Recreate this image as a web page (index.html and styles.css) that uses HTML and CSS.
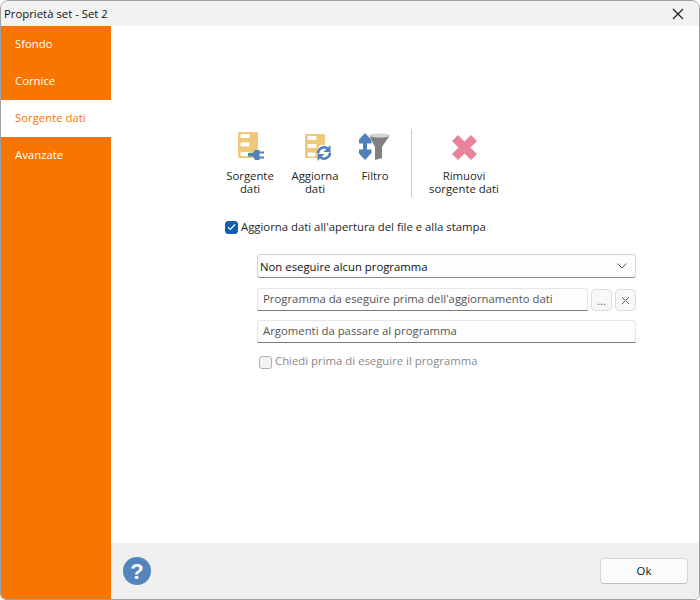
FILE: index.html
```html
<!DOCTYPE html>
<html lang="it">
<head>
<meta charset="utf-8">
<title>Proprietà set - Set 2</title>
<link rel="stylesheet" href="styles.css">
</head>
<body>
<div class="window">
  <header class="titlebar">
    <span class="title">Proprietà set - Set 2</span>
    <svg class="close" width="12" height="12" viewBox="0 0 12 12"><path d="M1 1l10 10M11 1L1 11" stroke="#1a1a1a" stroke-width="1.1" fill="none"/></svg>
  </header>
  <div class="main">
    <nav class="sidebar">
      <div class="nav-item">Sfondo</div>
      <div class="nav-item">Cornice</div>
      <div class="nav-item active">Sorgente dati</div>
      <div class="nav-item">Avanzate</div>
    </nav>
    <div class="content">
      <div class="panel">
        <div class="toolbar">
          <div class="tool tool-source">
            <svg class="icon" width="32" height="32" viewBox="0 0 32 32">
              <path d="M4 3.500Q4 2 5.500 2H22.500Q24 2 24 3.500V9Q24 10 23 10Q24 10 24 11V18Q24 19 23 19Q24 19 24 20V26.500Q24 28 22.500 28H5.500Q4 28 4 26.500Z" fill="#f0c87a"/>
              <rect x="6.500" y="4" width="9" height="4" rx="1" fill="#fff"/>
              <rect x="6.500" y="12.500" width="9" height="4" rx="1" fill="#fff"/>
              <rect x="6.500" y="22" width="9" height="4" rx="1" fill="#fff"/>
              <path d="M14 23H19L21 20H25.500V30H21L19 26.500H14Z" fill="#4f81bd"/>
              <path d="M25 22.500H30M25 27.500H30" stroke="#4f81bd" stroke-width="2.200" fill="none"/>
            </svg>
            <span class="tool-label">Sorgente<br>dati</span>
          </div>
          <div class="tool tool-refresh">
            <svg class="icon" width="32" height="32" viewBox="0 0 32 32">
              <path d="M6 5.500Q6 4 7.500 4H24.500Q26 4 26 5.500V10Q26 11 25 11Q26 11 26 12V15H22Q17 17 18 28H7.500Q6 28 6 26.500Z" fill="#f0c87a"/>
              <rect x="8.500" y="6" width="9" height="4" rx="1" fill="#fff"/>
              <rect x="8.500" y="14" width="9" height="4" rx="1" fill="#fff"/>
              <rect x="8.500" y="22.500" width="8" height="4" rx="1" fill="#fff"/>
              <path d="M19 23.500A6 6 0 0 1 28.500 18.500" stroke="#4f81bd" stroke-width="2.600" fill="none"/>
              <path d="M31.500 15V22H24.500Z" fill="#4f81bd"/>
              <path d="M31 22.500A6 6 0 0 1 21.500 27.500" stroke="#4f81bd" stroke-width="2.600" fill="none"/>
              <path d="M18.500 31V24H25.500Z" fill="#4f81bd"/>
            </svg>
            <span class="tool-label">Aggiorna<br>dati</span>
          </div>
          <div class="tool tool-filter">
            <svg class="icon" width="32" height="32" viewBox="0 0 32 32">
              <path d="M10 5H31L23 17V28L16 30V17Z" fill="#808080"/>
              <ellipse cx="20.500" cy="5.500" rx="10.500" ry="2" fill="#d4d4d4"/>
              <path d="M6 3L12.500 10V13.500H8V19.500H12.500V23L6 30L-.5 23V19.500H4V13.500H-.5V10Z" fill="#4f81bd"/>
            </svg>
            <span class="tool-label">Filtro</span>
          </div>
          <div class="divider"></div>
          <div class="tool tool-remove">
            <svg class="icon" width="32" height="32" viewBox="0 0 32 32">
              <path d="M4 11L10 5L16.500 11.500L23 5L29 11L22.500 17.500L29 24L23 30L16.500 23.500L10 30L4 24L10.500 17.500Z" fill="#e8849a"/>
            </svg>
            <span class="tool-label">Rimuovi<br>sorgente dati</span>
          </div>
        </div>
        <label class="check-row">
          <span class="check checked">
            <svg width="9" height="8" viewBox="0 0 9 8"><path d="M1 4.200L3.300 6.500L8 1.500" stroke="#fff" stroke-width="1.200" fill="none"/></svg>
          </span>
          <span class="check-label">Aggiorna dati all'apertura del file e alla stampa</span>
        </label>
        <div class="options">
          <div class="select">
            <span>Non eseguire alcun programma</span>
            <svg width="10" height="6" viewBox="0 0 10 6"><path d="M.5 .5L5 5L9.500 .5" stroke="#555" stroke-width="1" fill="none"/></svg>
          </div>
          <div class="program-row">
            <div class="input grow">Programma da eseguire prima dell'aggiornamento dati</div>
            <div class="mini-btn dots">...</div>
            <div class="mini-btn">
              <svg width="9" height="9" viewBox="0 0 9 9"><path d="M1 1l7 7M8 1L1 8" stroke="#666" stroke-width="1" fill="none"/></svg>
            </div>
          </div>
          <div class="input">Argomenti da passare al programma</div>
          <label class="check-row disabled">
            <span class="check"></span>
            <span class="check-label">Chiedi prima di eseguire il programma</span>
          </label>
        </div>
      </div>
      <footer class="footer">
        <svg class="help" width="28" height="28" viewBox="0 0 28 28">
          <circle cx="14" cy="14" r="14" fill="#5484bc"/>
          <text x="14" y="21.500" text-anchor="middle" class="help-mark">?</text>
        </svg>
        <button class="ok" type="button">Ok</button>
      </footer>
    </div>
  </div>
</div>
</body>
</html>
```

FILE: styles.css
```css
html, body {
  margin: 0;
  padding: 0;
}
body {
  width: 700px;
  height: 600px;
  overflow: hidden;
  background: #fff;
  font-family: "Open Sans", "Liberation Sans", sans-serif;
  font-size: 11.35px;
  color: #1f1f1f;
}
.window {
  box-sizing: border-box;
  width: 700px;
  height: 600px;
  border: 1px solid #a0a0a0;
  border-radius: 8px 8px 6px 6px;
  display: flex;
  flex-direction: column;
  overflow: hidden;
}
.titlebar {
  height: 25px;
  flex: none;
  background: #f2f2f2;
  display: flex;
  align-items: center;
  justify-content: space-between;
  padding: 0 15px 0 3px;
}
.title {
  color: #111;
}
.main {
  flex: 1;
  display: flex;
  min-height: 0;
}
.sidebar {
  width: 110px;
  flex: none;
  background: #f77500;
}
.nav-item {
  height: 37px;
  line-height: 36px;
  padding-left: 14px;
  color: #fff;
}
.nav-item.active {
  background: #fff;
  color: #f77500;
}
.content {
  flex: 1;
  display: flex;
  flex-direction: column;
  min-width: 0;
}
.panel {
  flex: 1;
  padding: 103px 63px 0 114px;
}
.toolbar {
  display: flex;
  height: 68px;
}
.tool {
  display: flex;
  flex-direction: column;
  align-items: center;
  text-align: center;
  line-height: 13px;
  padding-top: 1px;
}
.tool .icon {
  margin-bottom: 7px;
}
.tool-label {
  white-space: nowrap;
}
.tool-source { width: 50px; }
.tool-refresh { width: 50px; margin-left: 15px; }
.tool-filter { width: 36px; margin-left: 17px; }
.divider {
  width: 1px;
  background: #c8c8c8;
  margin-left: 18px;
}
.tool-remove { width: 80px; margin-left: 12px; }
.check-row {
  display: flex;
  align-items: center;
  gap: 3px;
  margin-top: 21px;
  height: 18px;
}
.check-label {
  padding-bottom: 2px;
}
.check {
  box-sizing: border-box;
  width: 13px;
  height: 13px;
  border-radius: 3px;
  border: 1px solid #b0b0b0;
  background: #f4f4f4;
  display: flex;
  align-items: center;
  justify-content: center;
}
.check.checked {
  border-color: #0f5fb0;
  background: #0f5fb0;
}
.options {
  margin-top: 18px;
  margin-left: 32px;
  display: flex;
  flex-direction: column;
}
.select {
  box-sizing: border-box;
  height: 24px;
  display: flex;
  align-items: center;
  justify-content: space-between;
  padding: 0 8px 0 2px;
  background: #fdfdfd;
  border: 1px solid #d4d4d4;
  border-bottom-color: #8a8a8a;
  border-radius: 3px;
  color: #111;
}
.program-row {
  display: flex;
  gap: 3px;
  margin-top: 10px;
}
.input {
  box-sizing: border-box;
  height: 23px;
  line-height: 20px;
  padding-left: 5px;
  background: #fdfdfd;
  border: 1px solid #e6e6e6;
  border-bottom: 1px solid #7a7a7a;
  border-radius: 3px 3px 0 0;
  color: #555;
}
.program-row + .input {
  margin-top: 9px;
}
.grow {
  flex: 1;
}
.mini-btn {
  box-sizing: border-box;
  width: 21px;
  height: 22px;
  margin-top: 1px;
  border: 1px solid #dcdcdc;
  border-radius: 4px;
  background: #f8f8f8;
  display: flex;
  align-items: center;
  justify-content: center;
  color: #666;
}
.check-row.disabled {
  color: #8a8a8a;
  margin-top: 10px;
  margin-left: 2px;
}
.disabled .check-label {
  padding-bottom: 4px;
}
.footer {
  height: 56px;
  flex: none;
  background: #efefef;
  display: flex;
  align-items: center;
  justify-content: space-between;
  padding: 0 11px 0 12px;
}
.help-mark {
  font-family: "Liberation Sans", sans-serif;
  font-size: 22px;
  font-weight: 700;
  fill: #fff;
}
.ok {
  box-sizing: border-box;
  width: 88px;
  height: 26px;
  border: 1px solid #d4d4d4;
  border-bottom-color: #c0c0c0;
  border-radius: 4px;
  background: #fbfbfb;
  font: inherit;
  color: #111;
  padding: 0 0 2px;
}
```
